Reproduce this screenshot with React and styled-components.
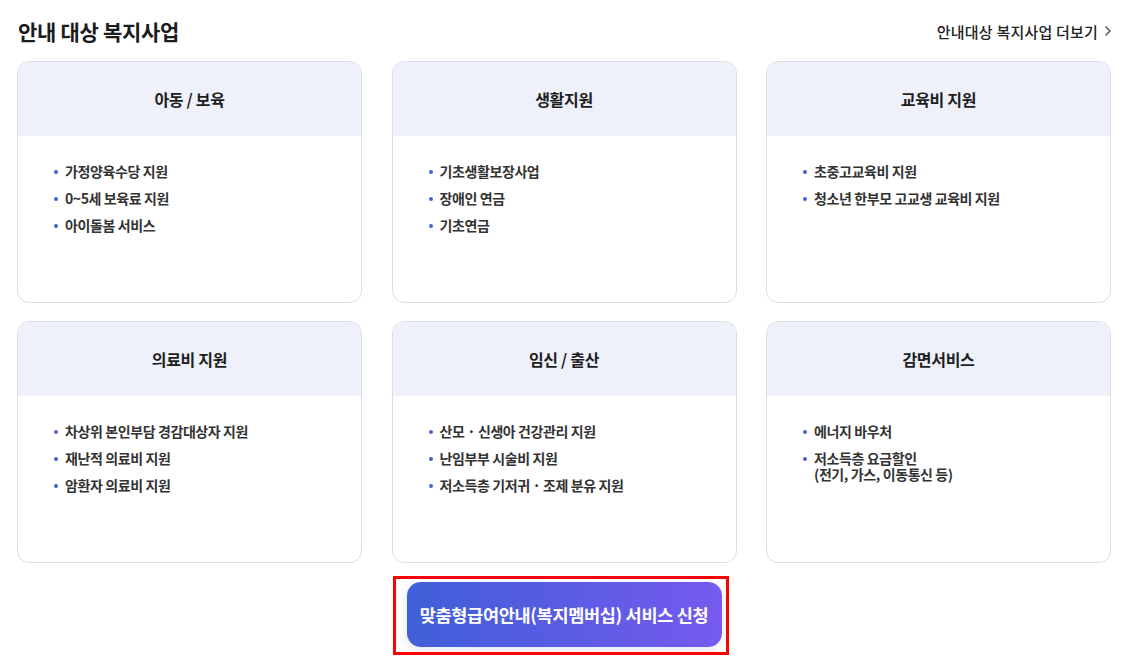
import React from "react";
import styled, { createGlobalStyle } from "styled-components";

const Global = createGlobalStyle`
  html, body { margin: 0; padding: 0; background: #fff; }
  body { font-family: "Noto Sans CJK KR", "Noto Sans", sans-serif; color: #222; }
  * { box-sizing: border-box; }
`;

const Page = styled.div`
  width: 1121px;
  padding: 16px 9px 0 17px;
`;

const TopBar = styled.div`
  display: flex;
  align-items: center;
  justify-content: space-between;
  height: 30px;
  margin-bottom: 15px;
`;

const Title = styled.h2`
  margin: 0 0 0 1px;
  font-size: 21px;
  font-weight: 600;
  color: #1c1c1c;
  letter-spacing: -0.3px;
`;

const MoreLink = styled.a`
  display: flex;
  align-items: center;
  gap: 6px;
  font-size: 15px;
  font-weight: 500;
  color: #222;
  text-decoration: none;
  letter-spacing: 0.2px;
`;

const Grid = styled.div`
  display: grid;
  grid-template-columns: repeat(3, 345px);
  column-gap: 29.5px;
  row-gap: 18px;
`;

const Card = styled.div`
  height: 242px;
  border: 1px solid #dcdee4;
  border-radius: 12px;
  overflow: hidden;
  background: #fff;
`;

const CardHead = styled.div`
  height: 74px;
  background: #eef1fa;
  display: flex;
  align-items: center;
  justify-content: center;
  font-size: 16px;
  font-weight: 700;
  color: #1e1e1e;
  letter-spacing: -0.3px;
`;

const List = styled.ul`
  list-style: none;
  margin: 0;
  padding: 27px 0 0 36px;
`;

const Item = styled.li`
  position: relative;
  padding-left: 11px;
  font-size: 14px;
  font-weight: 600;
  color: #333;
  line-height: 16px;
  margin-bottom: 11px;
  letter-spacing: -0.4px;
  white-space: pre-line;
  &::before {
    content: "";
    position: absolute;
    left: 0;
    top: 7px;
    width: 4px;
    height: 4px;
    border-radius: 50%;
    background: #4a5ed6;
  }
`;

const ButtonRow = styled.div`
  display: flex;
  justify-content: center;
  margin-top: 13px;
  padding-right: 8px;
`;

const Highlight = styled.div`
  border: 3px solid #ff0000;
  padding: 3px 4px 5px 11px;
`;

const ApplyButton = styled.button`
  width: 315px;
  height: 65px;
  border: none;
  border-radius: 14px;
  background: linear-gradient(90deg, #3f5fd8 0%, #5a5ce3 50%, #765aee 100%);
  box-shadow: 0 2px 10px rgba(80, 90, 200, 0.18);
  color: #fff;
  font-family: inherit;
  font-size: 17.5px;
  font-weight: 700;
  letter-spacing: -0.3px;
  cursor: pointer;
`;

const data = [
  { title: "아동 / 보육", items: ["가정양육수당 지원", "0~5세 보육료 지원", "아이돌봄 서비스"] },
  { title: "생활지원", items: ["기초생활보장사업", "장애인 연금", "기초연금"] },
  { title: "교육비 지원", items: ["초중고교육비 지원", "청소년 한부모 고교생 교육비 지원"] },
  { title: "의료비 지원", items: ["차상위 본인부담 경감대상자 지원", "재난적 의료비 지원", "암환자 의료비 지원"] },
  { title: "임신 / 출산", items: ["산모 · 신생아 건강관리 지원", "난임부부 시술비 지원", "저소득층 기저귀 · 조제 분유 지원"] },
  { title: "감면서비스", items: ["에너지 바우처", "저소득층 요금할인\n(전기, 가스, 이동통신 등)"] },
];

export default function App() {
  return (
    <>
      <Global />
      <Page>
        <TopBar>
          <Title>안내 대상 복지사업</Title>
          <MoreLink href="#">
            안내대상 복지사업 더보기
            <svg width="8" height="12" viewBox="0 0 8 12" fill="none">
              <path d="M1.5 1.5L6 6l-4.5 4.5" stroke="#444" strokeWidth="1.3" />
            </svg>
          </MoreLink>
        </TopBar>
        <Grid>
          {data.map((c) => (
            <Card key={c.title}>
              <CardHead>{c.title}</CardHead>
              <List>
                {c.items.map((it) => (
                  <Item key={it}>{it}</Item>
                ))}
              </List>
            </Card>
          ))}
        </Grid>
        <ButtonRow>
          <Highlight>
            <ApplyButton>맞춤형급여안내(복지멤버십) 서비스 신청</ApplyButton>
          </Highlight>
        </ButtonRow>
      </Page>
    </>
  );
}
